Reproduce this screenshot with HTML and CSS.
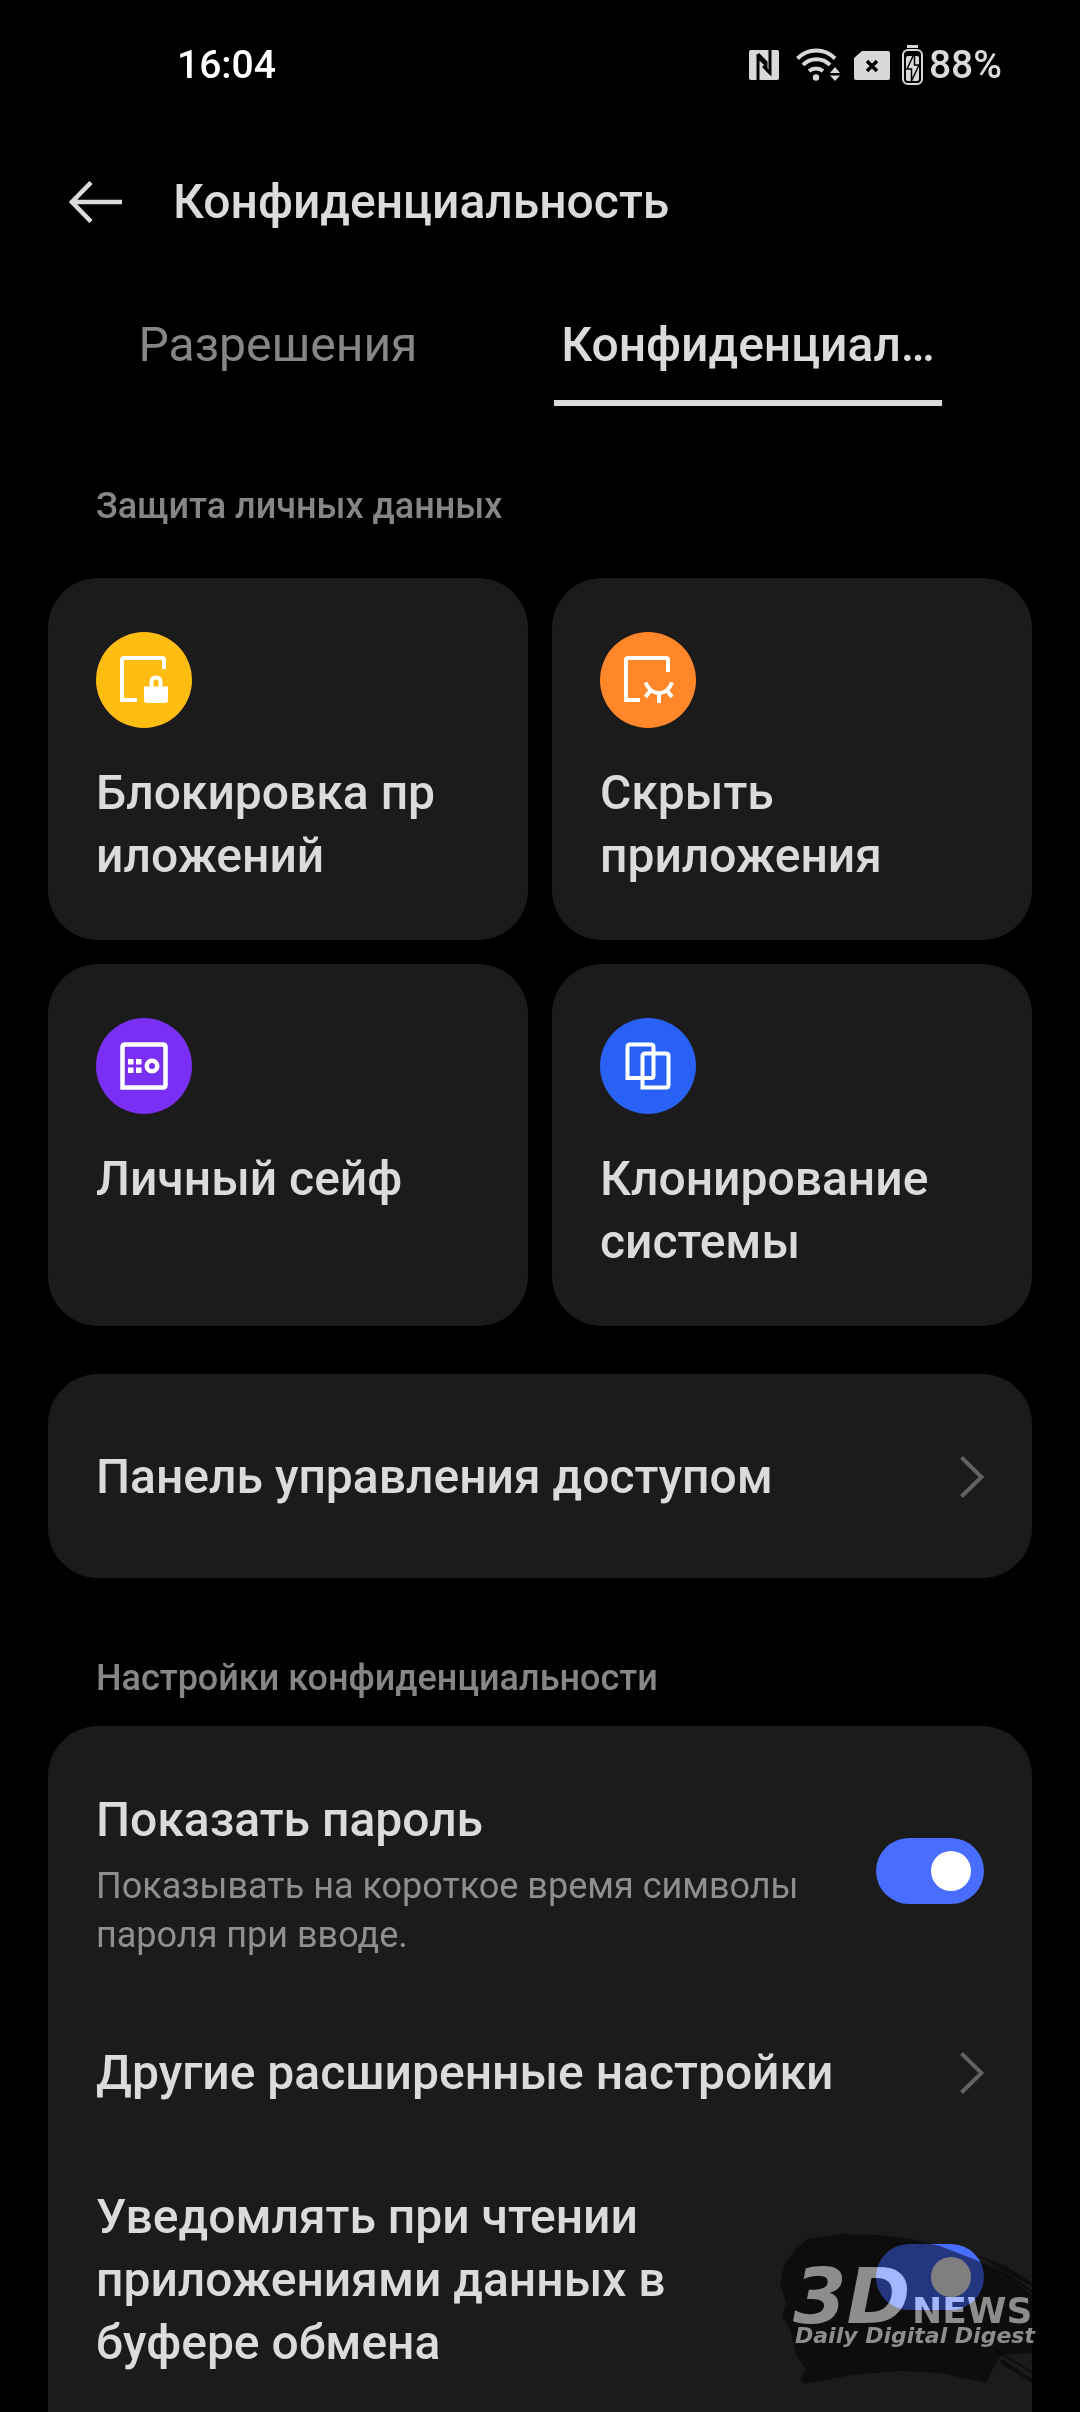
FILE: index.html
```html
<!DOCTYPE html>
<html lang="ru">
<head>
<meta charset="utf-8">
<meta name="viewport" content="width=device-width, initial-scale=1">
<title>Конфиденциальность</title>
<link rel="stylesheet" href="styles.css">
</head>
<body>
<div class="screen">
  <div class="status-bar">
    <time class="clock">16:04</time>
    <div class="status-icons">
      <svg width="35" height="40" viewBox="0 0 35 40" aria-hidden="true">
        <rect y="5" width="30" height="30" rx="2" fill="#d8d8d8"/>
        <path d="M9 35V12L17 20M21 5V28L14 21" fill="none" stroke="#000" stroke-width="3"/>
        <path d="M9 9L17 17V24L21 28" fill="none" stroke="#000" stroke-width="3"/>
      </svg>
      <svg width="46" height="40" viewBox="0 0 46 40" aria-hidden="true">
        <g fill="none" stroke="#d8d8d8" stroke-width="4">
          <path d="M1.500 13.500A26 26 0 0 1 39 13.500"/>
          <path d="M7 20A18.500 18.500 0 0 1 34 20"/>
          <path d="M13 26A11 11 0 0 1 27 26"/>
        </g>
        <circle cx="20" cy="32.500" r="3.200" fill="#d8d8d8"/>
        <path d="M39 22L44 28H34ZM39 36L44 30.500H34Z" fill="#d8d8d8"/>
      </svg>
      <svg width="36" height="40" viewBox="0 0 36 40" aria-hidden="true">
        <path d="M8 6H34Q36 6 36 8V33Q36 35 34 35H2Q0 35 0 33V13Z" fill="#d8d8d8"/>
        <path d="M13 16L23 26M23 16L13 26" stroke="#000" stroke-width="3.500"/>
      </svg>
      <div class="battery">
        <svg width="21" height="40" viewBox="0 0 21 40" aria-hidden="true">
          <path d="M5 1.500H16" stroke="#d8d8d8" stroke-width="3"/>
          <rect x="1" y="5" width="19" height="34" rx="5" fill="none" stroke="#d8d8d8" stroke-width="2"/>
          <rect x="4" y="11" width="13" height="25" rx="2" fill="#d8d8d8"/>
          <path d="M11.500 10L5 24H9.500V36L17 20H12.500V10Z" fill="#d8d8d8" stroke="#000" stroke-width="1.500"/>
        </svg>
        <span>88%</span>
      </div>
    </div>
  </div>

  <header class="app-bar">
    <button class="back" type="button" aria-label="Назад">
      <svg width="54" height="42" viewBox="0 0 54 42" aria-hidden="true">
        <path d="M22 1.500L3 21L22 40.500M3 21H53" fill="none" stroke="#dbdbdb" stroke-width="4.500"/>
      </svg>
    </button>
    <h1 class="title">Конфиденциальность</h1>
  </header>

  <nav class="tabs">
    <a class="tab" href="#permissions">Разрешения</a>
    <a class="tab tab-active" href="#privacy" aria-current="page">Конфиденциал…</a>
  </nav>

  <main class="content">
    <h2 class="section">Защита личных данных</h2>
    <div class="tiles">
      <a class="tile" href="#app-lock">
        <svg width="96" height="96" viewBox="0 0 96 96" aria-hidden="true">
          <circle cx="48" cy="48" r="48" fill="#ffbc11"/>
          <path d="M68 37V28Q68 26 66 26H28Q26 26 26 28V68H41" fill="none" stroke="#fff" stroke-width="4"/>
          <path d="M48 54.500H72V68Q72 71 69 71H51Q48 71 48 68Z" fill="#fff"/>
          <path d="M55.500 56V50Q55.500 45.500 60 45.500T64.500 50V56" fill="none" stroke="#fff" stroke-width="4"/>
        </svg>
        <span>Блокировка пр<wbr>иложений</span>
      </a>
      <a class="tile" href="#hide-apps">
        <svg width="96" height="96" viewBox="0 0 96 96" aria-hidden="true">
          <circle cx="48" cy="48" r="48" fill="#ff8629"/>
          <g fill="none" stroke="#fff" stroke-width="4">
            <path d="M68 40V28Q68 26 66 26H28Q26 26 26 28V68H40"/>
            <path d="M45.500 50.500Q50 61 59 61T72 50.500M50 59L45.500 65M59 61V71M67.500 59L72 65"/>
          </g>
        </svg>
        <span>Скрыть приложения</span>
      </a>
      <a class="tile" href="#private-safe">
        <svg width="96" height="96" viewBox="0 0 96 96" aria-hidden="true">
          <circle cx="48" cy="48" r="48" fill="#7a2ff4"/>
          <path d="M26.500 69.500V29Q26.500 26.500 29 26.500H67Q69.500 26.500 69.500 29V67Q69.500 69.500 67 69.500Z" fill="none" stroke="#fff" stroke-width="4.500"/>
          <path d="M32 41H37.500V46.500H32ZM40 41H45.500V46.500H40ZM32 49.500H37.500V55H32ZM40 49.500H45.500V55H40Z" fill="#fff"/>
          <circle cx="56" cy="48" r="5.300" fill="none" stroke="#fff" stroke-width="4.500"/>
        </svg>
        <span>Личный сейф</span>
      </a>
      <a class="tile" href="#system-cloner">
        <svg width="96" height="96" viewBox="0 0 96 96" aria-hidden="true">
          <circle cx="48" cy="48" r="48" fill="#2861f4"/>
          <g fill="none" stroke="#fff" stroke-width="4">
            <path d="M27.500 60V29Q27.500 26.500 30 26.500H51Q53.500 26.500 53.500 29V57.500Q53.500 60 51 60Z"/>
            <path d="M42.500 69.500V38Q42.500 35.500 45 35.500H66Q68.500 35.500 68.500 38V67Q68.500 69.500 66 69.500Z"/>
          </g>
        </svg>
        <span>Клонирование системы</span>
      </a>
    </div>

    <a class="panel" href="#dashboard">
      <span>Панель управления доступом</span>
      <svg class="chevron" width="24" height="42" viewBox="0 0 24 42" aria-hidden="true">
        <path d="M1.500 1.500L21.500 21L1.500 40.500" fill="none" stroke="#626262" stroke-width="4"/>
      </svg>
    </a>

    <h2 class="section section-tight">Настройки конфиденциальности</h2>
    <div class="list">
      <label class="row">
        <span class="row-text">Показать пароль
          <small class="hint">Показывать на короткое время символы пароля при вводе.</small>
        </span>
        <input class="switch" type="checkbox" role="switch" checked>
      </label>
      <a class="row" href="#advanced">
        <span class="row-text">Другие расширенные настройки</span>
        <svg class="chevron" width="24" height="42" viewBox="0 0 24 42" aria-hidden="true">
          <path d="M1.500 1.500L21.500 21L1.500 40.500" fill="none" stroke="#626262" stroke-width="4"/>
        </svg>
      </a>
      <label class="row row-last">
        <span class="row-text">Уведомлять при чтении приложениями данных в буфере обмена</span>
        <input class="switch" type="checkbox" role="switch" checked>
      </label>
    </div>
  </main>

  <svg class="watermark" width="260" height="170" viewBox="0 0 260 170" aria-hidden="true">
    <g fill="#000" fill-opacity="0.500">
      <path d="M27 6L60 1L100 2L130 6L160 13L196 27L226 42L252 62V120L222 122L216 130L206 150L160 140L120 138L72 142L24 151L20 146L26 136L16 122L10 96L2 84L6 70L0 50L4 32L14 18Z"/>
      <path d="M196 22L226 33L252 50V54L222 37ZM200 27L230 42L252 57V60L226 43ZM222 126L252 146V150L220 130ZM216 116L252 138V140L216 119Z"/>
    </g>
  </svg>
  <svg class="watermark watermark-text" width="260" height="170" viewBox="0 0 260 170">
    <g fill="#808080" font-family="DejaVu Sans, sans-serif" font-weight="700">
      <text class="mark-large" x="13" y="90">3D</text>
      <text class="mark-medium" x="132" y="90">NEWS</text>
      <text class="mark-small" x="15" y="110">Daily Digital Digest</text>
    </g>
  </svg>
</div>
</body>
</html>
```
FILE: styles.css
```css
* {
  box-sizing: border-box;
}

body {
  margin: 0;
  background: #000;
  color: #dbdbdb;
  font-family: Roboto, "Noto Sans", sans-serif;
  font-size: 48px;
  font-weight: 500;
  line-height: 63px;
}

a {
  color: inherit;
  text-decoration: none;
}

svg {
  display: block;
  flex: none;
}

.screen {
  position: relative;
  display: flex;
  flex-direction: column;
  min-height: 100vh;
  overflow: hidden;
}

.status-bar {
  display: flex;
  justify-content: space-between;
  align-items: center;
  padding: 41px 78px 39px 177px;
  font-size: 39px;
  line-height: 48px;
}

.clock {
  color: #fff;
}

.status-icons {
  display: flex;
  align-items: center;
  gap: 12px;
}

.battery {
  display: flex;
  align-items: center;
  gap: 6px;
}

.app-bar {
  display: flex;
  align-items: center;
  gap: 50px;
  padding: 42px 48px 0 69px;
}

.back {
  padding: 0;
  border: 0;
  background: none;
}

.title {
  margin: 0;
  font: inherit;
}

.tabs {
  display: grid;
  grid-template-columns: 1fr 1fr;
  gap: 82px;
  padding: 80px 138px 0 84px;
}

.tab {
  padding-bottom: 24px;
  border-bottom: 6px solid transparent;
  color: #868686;
  font-weight: 400;
  text-align: center;
  white-space: nowrap;
}

.tab-active {
  border-color: #dbdbdb;
  color: #dbdbdb;
  font-weight: 500;
}

.content {
  display: flex;
  flex: 1;
  flex-direction: column;
  padding: 0 48px;
}

.section {
  margin: 76px 48px 48px;
  color: #868686;
  font-size: 36px;
  font-weight: 500;
  line-height: 48px;
}

.section-tight {
  margin-bottom: 24px;
}

.tiles {
  display: grid;
  grid-template-columns: 1fr 1fr;
  gap: 24px;
  margin-bottom: 48px;
}

.tile {
  display: flex;
  flex-direction: column;
  gap: 33px;
  min-height: 362px;
  padding: 54px 48px 53px;
  border-radius: 50px;
  background: #1b1b1b;
}

.panel {
  display: flex;
  justify-content: space-between;
  align-items: center;
  padding: 71px 48px 70px;
  border-radius: 50px;
  background: #1b1b1b;
}

.list {
  flex: 1;
  padding-top: 21px;
  border-radius: 50px 50px 0 0;
  background: #1b1b1b;
}

.row {
  display: flex;
  justify-content: space-between;
  align-items: center;
  gap: 48px;
  padding: 41px 48px 40px;
}

.row-last {
  padding-bottom: 0;
}

.hint {
  display: block;
  margin-top: 11px;
  color: #8f8f8f;
  font-size: 36px;
  font-weight: 400;
  line-height: 49px;
}

.switch {
  display: flex;
  flex: none;
  align-items: center;
  width: 108px;
  height: 66px;
  margin: 0 0 6px;
  padding: 0 13px;
  border-radius: 33px;
  background: #444;
  appearance: none;
}

.switch::before {
  content: "";
  width: 40px;
  height: 40px;
  border-radius: 50%;
  background: #fff;
}

.switch:checked {
  justify-content: flex-end;
  background: #486dff;
}

.watermark {
  position: absolute;
  right: 40px;
  bottom: 9px;
  pointer-events: none;
}

.watermark-text {
  mix-blend-mode: plus-lighter;
}

.mark-large {
  font-size: 77px;
  font-style: italic;
}

.mark-medium {
  font-size: 36px;
}

.mark-small {
  font-size: 22px;
  font-style: italic;
}
```
